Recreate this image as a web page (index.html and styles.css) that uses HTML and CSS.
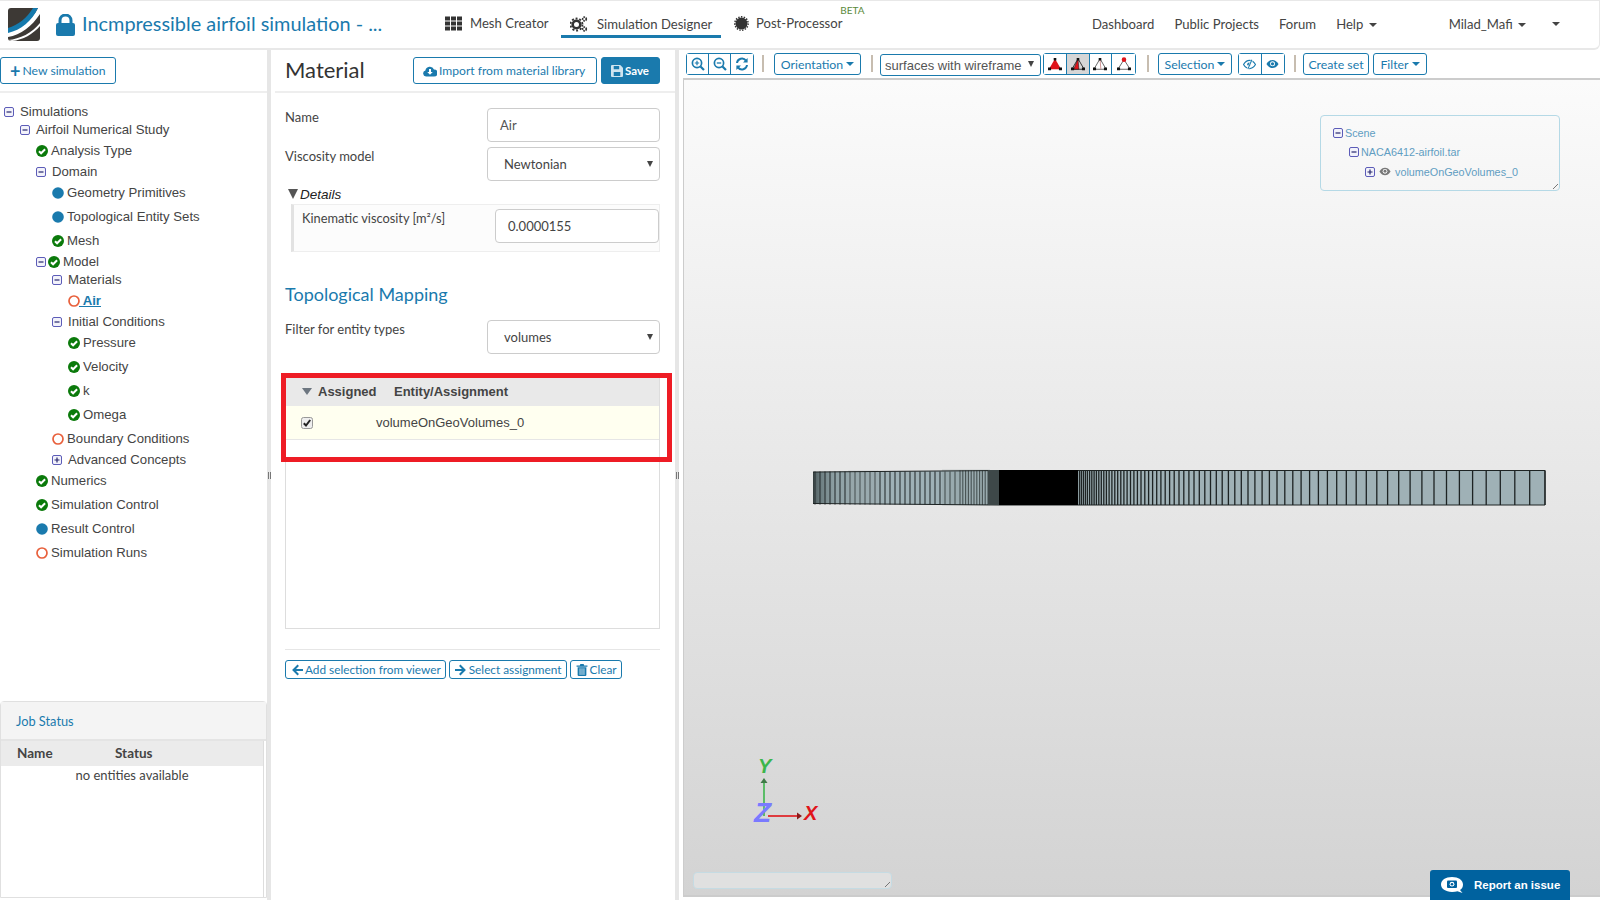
FILE: index.html
```html
<!DOCTYPE html>
<html lang="en">
<head>
<meta charset="utf-8">
<title>Material</title>
<link rel="stylesheet" href="styles.css">
</head>
<body>
<svg class="defs" aria-hidden="true">
  <symbol id="i-check" viewBox="0 0 12 12"><circle cx="6" cy="6" r="6" fill="#0b7a0b"/><path d="M3 6.2 5.1 8.3 9.1 4.2" fill="none" stroke="#fff" stroke-width="2"/></symbol>
  <symbol id="i-blue" viewBox="0 0 12 12"><circle cx="6" cy="6" r="5.8" fill="#1a7aad"/></symbol>
  <symbol id="i-ring" viewBox="0 0 12 12"><circle cx="6" cy="6" r="5" fill="none" stroke="#e8603c" stroke-width="1.7"/></symbol>
  <symbol id="i-minus" viewBox="0 0 10 10"><rect x=".5" y=".5" width="9" height="9" rx="1.5" fill="#f2f2fa" stroke="#5c5cb8"/><path d="M2.5 5h5" stroke="#26266e" stroke-width="1.2"/></symbol>
  <symbol id="i-plus" viewBox="0 0 10 10"><rect x=".5" y=".5" width="9" height="9" rx="1.5" fill="#f2f2fa" stroke="#5c5cb8"/><path d="M2.5 5h5M5 2.5v5" stroke="#26266e" stroke-width="1.2"/></symbol>
  <symbol id="i-zoomin" viewBox="0 0 14 14"><circle cx="6" cy="6" r="4.6" fill="none" stroke="#1a7aad" stroke-width="1.7"/><path d="M9.5 9.5 13 13" stroke="#1a7aad" stroke-width="2.2"/><path d="M3.8 6h4.4M6 3.8v4.4" stroke="#1a7aad" stroke-width="1.2"/></symbol>
  <symbol id="i-zoomout" viewBox="0 0 14 14"><circle cx="6" cy="6" r="4.6" fill="none" stroke="#1a7aad" stroke-width="1.7"/><path d="M9.5 9.5 13 13" stroke="#1a7aad" stroke-width="2.2"/><path d="M3.8 6h4.4" stroke="#1a7aad" stroke-width="1.3"/></symbol>
  <symbol id="i-refresh" viewBox="0 0 14 14"><path d="M2 6A5 5 0 0 1 11 3.6" fill="none" stroke="#1a7aad" stroke-width="2"/><path d="M12.6 1v4.6H8z" fill="#1a7aad"/><path d="M12 8A5 5 0 0 1 3 10.4" fill="none" stroke="#1a7aad" stroke-width="2"/><path d="M1.4 13V8.4H6z" fill="#1a7aad"/></symbol>
  <symbol id="i-eye" viewBox="0 0 14 10"><path d="M.5 5C2.5 1.8 4.6.6 7 .6s4.500 1.200 6.500 4.400C11.500 8.200 9.400 9.400 7 9.400S2.500 8.200.5 5z" fill="currentColor"/><circle cx="7" cy="4.800" r="2.700" fill="#fff"/><circle cx="7" cy="4.800" r="1.700" fill="currentColor"/></symbol>
  <symbol id="i-eyeoff" viewBox="0 0 14 12"><path d="M.5 6C2.500 2.800 4.600 1.600 7 1.600s4.500 1.200 6.500 4.400C11.500 9.200 9.400 10.400 7 10.400S2.500 9.200.5 6z" fill="none" stroke="currentColor" stroke-width="1.300"/><circle cx="6.500" cy="5.800" r="2" fill="currentColor"/><path d="M10 .5 5 11.500" stroke="#fff" stroke-width="2.200"/><path d="M9.600 .8 5.200 11" stroke="currentColor" stroke-width="1.100"/></symbol>
  <symbol id="i-corners" viewBox="0 0 16 16"><path d="M6.500 1h3v3h-3zM0 12h3.500v3H0zM12.500 12H16v3h-3.500z" fill="#111"/></symbol>
</svg>

<header class="topbar">
  <svg class="logo" viewBox="0 0 32 33"><rect width="32" height="33" rx="3" fill="#3d3935"/><path d="M0 24C12 21 23 13 30 0h2v6C24 18 13 27 0 29z" fill="#fff"/><path d="M0 25C13 22 24 13 30 0h-5C19 10 10 17 0 20z" fill="#1579ac"/><path d="M0 32C12 31 24 25 32 15v3C25 26 15 32 4 33z" fill="#fff"/></svg>
  <svg class="lock" viewBox="0 0 19 22"><path d="M4 10V6.500a5.500 5.500 0 0 1 11 0V10" fill="none" stroke="#1a7aad" stroke-width="3"/><rect y="9" width="19" height="13" rx="2" fill="#1a7aad"/></svg>
  <span class="project">Incmpressible airfoil simulation - ...</span>
  <nav class="apps">
    <a class="app app-mesh"><svg class="app-ico" viewBox="0 0 17 14"><path d="M0 0h5v4H0zM6 0h5v4H6zM12 0h5v4h-5zM0 5h5v4H0zM6 5h5v4H6zM12 5h5v4h-5zM0 10h5v4H0zM6 10h5v4H6zM12 10h5v4h-5z" fill="#333"/></svg>Mesh Creator</a>
    <a class="app app-active"><svg class="app-ico app-ico-cog" viewBox="0 0 18 16"><circle cx="6.500" cy="8.500" r="3.800" fill="none" stroke="#333" stroke-width="2.600"/><circle cx="6.500" cy="8.500" r="6" fill="none" stroke="#333" stroke-width="1.800" stroke-dasharray="2 1.800"/><circle cx="14.500" cy="3" r="1.800" fill="none" stroke="#333" stroke-width="1.700" stroke-dasharray="1.500 .7"/><circle cx="14.500" cy="13" r="1.800" fill="none" stroke="#333" stroke-width="1.700" stroke-dasharray="1.500 .7"/></svg>Simulation Designer</a>
    <a class="app app-post"><svg class="app-ico app-ico-post" viewBox="0 0 15 15"><circle cx="7.500" cy="7.500" r="6" fill="#333"/><circle cx="7.500" cy="7.500" r="6.700" fill="none" stroke="#333" stroke-width="1.400" stroke-dasharray="1.500 1.300"/></svg>Post-Processor<sup class="beta">BETA</sup></a>
  </nav>
  <nav class="links">
    <a class="link">Dashboard</a>
    <a class="link">Public Projects</a>
    <a class="link">Forum</a>
    <a class="link">Help <i class="caret"></i></a>
    <a class="link link-user">Milad_Mafi <i class="caret"></i></a>
    <i class="caret caret-end"></i>
  </nav>
</header>

<main class="workspace">
  <aside class="left">
    <div class="left-top"><a class="btn btn-new"><b class="plus">+</b>New simulation</a></div>
    <ul class="tree">
      <li class="node"><svg class="tg"><use href="#i-minus"/></svg>Simulations
      <ul class="sub">
        <li class="node"><svg class="tg"><use href="#i-minus"/></svg>Airfoil Numerical Study
        <ul class="sub">
          <li class="leaf"><svg class="st"><use href="#i-check"/></svg>Analysis Type</li>
          <li class="node"><svg class="tg"><use href="#i-minus"/></svg>Domain
          <ul class="sub">
            <li class="leaf"><svg class="st"><use href="#i-blue"/></svg>Geometry Primitives</li>
            <li class="leaf"><svg class="st"><use href="#i-blue"/></svg>Topological Entity Sets</li>
            <li class="leaf"><svg class="st"><use href="#i-check"/></svg>Mesh</li>
          </ul></li>
          <li class="node"><svg class="tg tg-tight"><use href="#i-minus"/></svg><svg class="st"><use href="#i-check"/></svg>Model
          <ul class="sub">
            <li class="node"><svg class="tg"><use href="#i-minus"/></svg>Materials
            <ul class="sub">
              <li class="leaf leaf-air"><svg class="st"><use href="#i-ring"/></svg><a class="current">&nbsp;Air</a></li>
            </ul></li>
            <li class="node"><svg class="tg"><use href="#i-minus"/></svg>Initial Conditions
            <ul class="sub">
              <li class="leaf"><svg class="st"><use href="#i-check"/></svg>Pressure</li>
              <li class="leaf"><svg class="st"><use href="#i-check"/></svg>Velocity</li>
              <li class="leaf"><svg class="st"><use href="#i-check"/></svg>k</li>
              <li class="leaf"><svg class="st"><use href="#i-check"/></svg>Omega</li>
            </ul></li>
            <li class="leaf"><svg class="st"><use href="#i-ring"/></svg>Boundary Conditions</li>
            <li class="node"><svg class="tg"><use href="#i-plus"/></svg>Advanced Concepts</li>
          </ul></li>
        </ul></li>
        <li class="leaf leaf-l1"><svg class="st"><use href="#i-check"/></svg>Numerics</li>
        <li class="leaf leaf-l1"><svg class="st"><use href="#i-check"/></svg>Simulation Control</li>
        <li class="leaf leaf-l1"><svg class="st"><use href="#i-blue"/></svg>Result Control</li>
        <li class="leaf leaf-l1"><svg class="st"><use href="#i-ring"/></svg>Simulation Runs</li>
      </ul></li>
    </ul>
    <section class="jobs">
      <h3 class="jobs-head">Job Status</h3>
      <div class="jobs-body">
        <div class="jobs-cols"><b class="col-name">Name</b><b>Status</b></div>
        <p class="jobs-empty">no entities available</p>
      </div>
    </section>
  </aside>
  <div class="split"><i class="grip"></i></div>

  <section class="center">
    <div class="title-row">
      <h1 class="title">Material</h1>
      <a class="btn btn-import"><svg class="bi bi-cloud" viewBox="0 0 14 11"><path d="M3 11a3 3 0 0 1-.6-5.900A4.500 4.500 0 0 1 11 4a3.500 3.500 0 0 1 0 7z" fill="#1a7aad"/><path d="M6 3.500h2v3h1.800L7 9.300 4.200 6.500H6z" fill="#fff"/></svg>Import from material library</a>
      <a class="btn btn-save"><svg class="bi" viewBox="0 0 11 11"><path d="M0 1a1 1 0 0 1 1-1h7.500L11 2.500V10a1 1 0 0 1-1 1H1a1 1 0 0 1-1-1z" fill="#cfe4ef"/><path d="M2.500 1h5v3h-5zM2.500 6.500h6V10h-6z" fill="#1a7aad"/></svg>Save</a>
    </div>
    <div class="form">
      <div class="row row-name"><label class="lbl">Name</label><span class="field field-text">Air</span></div>
      <div class="row row-visc"><label class="lbl">Viscosity model</label><span class="field field-sel">Newtonian<i class="sel-arrow"></i></span></div>
      <div class="details-title"><i class="tri-down"></i><em>Details</em></div>
      <div class="details">
        <label class="lbl lbl-kin">Kinematic viscosity [m²/s]</label><span class="field field-num">0.0000155</span>
      </div>
      <h2 class="mapping">Topological Mapping</h2>
      <div class="row row-filter"><label class="lbl">Filter for entity types</label><span class="field field-sel">volumes<i class="sel-arrow"></i></span></div>
      <div class="assign">
        <div class="assign-head"><i class="tri-sort"></i><b class="col-assigned">Assigned</b><b>Entity/Assignment</b></div>
        <div class="assign-row"><svg class="cb" viewBox="0 0 12 12"><rect x=".5" y=".5" width="11" height="11" rx="2" fill="#eee" stroke="#999"/><path d="M2.800 6.200 5 8.500 9.200 3" fill="none" stroke="#222" stroke-width="2"/></svg><span>volumeOnGeoVolumes_0</span></div>
      </div>
      <div class="highlight"></div>
      <div class="actions">
        <a class="btn btn-sm"><svg class="bi" viewBox="0 0 11 11"><path d="M6 .5 1 5.500l5 5 1.300-1.300-2.700-2.700H11v-2H4.600l2.700-2.700z" fill="#1a7aad"/></svg>Add selection from viewer</a>
        <a class="btn btn-sm"><svg class="bi" viewBox="0 0 11 11"><path d="M5 .5 10 5.500l-5 5-1.300-1.300 2.700-2.700H0v-2h6.400L3.700 1.800z" fill="#1a7aad"/></svg>Select assignment</a>
        <a class="btn btn-sm"><svg class="bi" viewBox="0 0 10 11"><path d="M3.500 0h3l.5 1.300h3v1.200H0V1.300h3zM1 3h8v7a1 1 0 0 1-1 1H2a1 1 0 0 1-1-1z" fill="#1a7aad"/><path d="M3.200 4v6M5 4v6M6.800 4v6" stroke="#fff" stroke-width=".7"/></svg>Clear</a>
      </div>
    </div>
  </section>
  <div class="split split-2"><i class="grip"></i></div>

  <section class="viewer">
    <div class="toolbar">
      <div class="group"><a class="tb tb-icon"><svg class="ti"><use href="#i-zoomin"/></svg></a><a class="tb tb-icon"><svg class="ti"><use href="#i-zoomout"/></svg></a><a class="tb tb-icon"><svg class="ti"><use href="#i-refresh"/></svg></a></div>
      <i class="sep"></i>
      <a class="tb tb-orient">Orientation <i class="caret caret-blue"></i></a>
      <i class="sep sep-2"></i>
      <span class="tb-select">surfaces with wireframe<i class="sel-arrow sel-arrow-sm"></i></span>
      <div class="group group-tri">
        <a class="tb tb-tri"><svg class="tri" viewBox="0 0 16 16"><path d="M8 2 15 14H1z" fill="#e0141a"/><use href="#i-corners"/></svg></a>
        <a class="tb tb-tri tb-on"><svg class="tri" viewBox="0 0 16 16"><path d="M8 2 15 14H1z" fill="none" stroke="#222"/><path d="M8 2 9 14H3z" fill="#e0141a" stroke="#111" stroke-width=".6"/><use href="#i-corners"/></svg></a>
        <a class="tb tb-tri"><svg class="tri" viewBox="0 0 16 16"><path d="M8 2 15 14H1z" fill="#fff" stroke="#555"/><path d="M8 2 9 14" stroke="#c88"/><use href="#i-corners"/></svg></a>
        <a class="tb tb-tri"><svg class="tri" viewBox="0 0 16 16"><path d="M8 3 15 14H1z" fill="#fff" stroke="#555"/><use href="#i-corners"/><circle cx="8" cy="3" r="2.600" fill="#e0141a"/></svg></a>
      </div>
      <i class="sep sep-3"></i>
      <a class="tb tb-sel">Selection <i class="caret caret-blue"></i></a>
      <div class="group group-eye"><a class="tb tb-eye"><svg class="ei"><use href="#i-eyeoff"/></svg></a><a class="tb tb-eye"><svg class="ei ei-b"><use href="#i-eye"/></svg></a></div>
      <i class="sep sep-4"></i>
      <a class="tb tb-create">Create set</a>
      <a class="tb tb-filter">Filter <i class="caret caret-blue"></i></a>
    </div>
    <div class="canvas">
      <svg class="mesh" id="mesh" viewBox="813 468 733 40"></svg>
      <svg class="axes" viewBox="0 0 80 80">
        <path d="M20 66V32" stroke="#3cb64c" stroke-width="1.600"/>
        <path d="M20 28 16.500 33h7z" fill="#3f7a47"/>
        <path d="M24 66H54" stroke="#e0141a" stroke-width="1.600"/>
        <path d="M58 66 53 62.500v7z" fill="#8a1a1a"/>
        <text class="ax ax-y" x="14" y="23">Y</text>
        <text class="ax ax-x" x="60" y="70">X</text>
        <text class="ax ax-z" x="10" y="72">Z</text>
      </svg>
      <div class="scene">
        <div class="sc-row"><svg class="tg sc-tg"><use href="#i-minus"/></svg>Scene</div>
        <div class="sc-row sc-2"><svg class="tg sc-tg"><use href="#i-minus"/></svg>NACA6412-airfoil.tar</div>
        <div class="sc-row sc-3"><svg class="tg sc-tg"><use href="#i-plus"/></svg><svg class="sc-eye"><use href="#i-eye"/></svg>volumeOnGeoVolumes_0</div>
        <i class="resize"></i>
      </div>
      <div class="status-box"><i class="resize"></i></div>
      <a class="report"><svg class="cam" viewBox="0 0 24 18"><path d="M12 1c6.500 0 11 3 11 7.500 0 2.500-1 4.500-3 5.500l2.500 3-5-1.800c-1.500.5-3.300.8-5.500.8C5.500 15.500 1 12.900 1 8.500S5.500 1 12 1z" fill="#fff"/><rect x="7" y="4.500" width="10" height="7.500" rx="1" fill="#00629f"/><circle cx="12" cy="8.200" r="2.400" fill="#fff"/><circle cx="12" cy="8.200" r="1.300" fill="#00629f"/></svg>Report an issue</a>
    </div>
  </section>
</main>
<script src="mesh.js"></script>
</body>
</html>
```
FILE: styles.css
```css
* { box-sizing: border-box; }
html, body { margin: 0; height: 900px; overflow: hidden; background: #fff; }
body { font: 14px "Liberation Sans", Arial, sans-serif; color: #444; }
.defs { display: none; }
a { color: inherit; text-decoration: none; }
ul { list-style: none; margin: 0; padding: 0; }

.topbar { height: 50px; display: flex; align-items: center; border: 1px solid #e8e8e8; border-width: 1px 1px 2px 0; border-radius: 0 0 6px 0; font-family: Lato, sans-serif; }
.logo { width: 32px; height: 33px; margin-left: 8px; flex: none; }
.lock { width: 19px; height: 22px; margin-left: 16px; flex: none; }
.project { font-size: 19.900px; color: #1a7aad; margin: 0 0 3px 7px; width: 351px; white-space: nowrap; }
.apps { display: flex; height: 100%; align-items: stretch; font-size: 13.100px; color: #444; padding-bottom: 3px; }
.app { display: flex; align-items: center; padding: 0 12px; position: relative; white-space: nowrap; }
.app-mesh { width: 128px; padding-left: 12px; }
.app-ico { width: 17px; height: 15px; margin-right: 8px; flex: none; }
.app-ico-cog { width: 18px; height: 16px; margin-right: 9px; }
.app-active { width: 160px; height: 37px; border-bottom: 3px solid #1a7aad; padding: 12px 0 0 9px; }
.app-post { padding-left: 13px; }
.app-ico-post { width: 15px; height: 15px; margin-right: 7px; }
.beta { position: absolute; right: -10px; top: 3px; font-size: 10px; color: #5a8a3a; line-height: 12px; }
.links { margin-left: auto; display: flex; align-items: center; font-size: 13.100px; color: #444; margin-bottom: 1px; }
.link { margin-right: 20px; white-space: nowrap; }
.link-user { margin-left: 52px; margin-right: 23px; }
.caret { display: inline-block; width: 0; height: 0; border: 4px solid transparent; border-top-color: #444; border-bottom: 0; vertical-align: 2px; margin-left: 2px; }
.caret-end { margin: 0 39px 0 3px; }
.caret-blue { border-top-color: #1a7aad; margin-left: 3px; }

.workspace { display: flex; height: 850px; }
.left { width: 267px; flex: none; display: flex; flex-direction: column; }
.split { width: 4px; flex: none; background: #e6e6e6; position: relative; }
.split-2 { margin-right: 4px; }
.grip { position: absolute; left: 1px; top: 422px; width: 3px; height: 7px; border: solid #777; border-width: 0 1px; }

.btn { display: inline-flex; align-items: center; border: 1px solid #1a7aad; border-radius: 3px; color: #1a7aad; font: 12px Lato, sans-serif; white-space: nowrap; background: #fff; }
.left-top { height: 43px; border-bottom: 2px solid #eee; padding-top: 7px; }
.btn-new { height: 27px; width: 116px; padding-left: 9px; font-size: 12.200px; }
.plus { font-size: 18px; line-height: 12px; margin-right: 2px; }

.tree { margin-top: 10px; font-size: 13.200px; line-height: 18px; color: #444; }
.tree .sub { padding-left: 16px; }
.node { white-space: nowrap; }
.leaf { height: 24px; line-height: 24px; white-space: nowrap; }
.tg { width: 10px; height: 10px; margin: 0 6px 0 4px; vertical-align: -1px; }
.tg-tight { margin-right: 2px; }
.st { width: 12px; height: 12px; margin: 0 3px 0 4px; vertical-align: -2px; }
.tg-tight + .st { margin-left: 0; }
.tree > .node > .sub > .leaf { padding-left: 16px; margin-left: 0; }
.current { color: #1a7aad; font-weight: bold; text-decoration: underline; margin-left: -4px; }

.jobs { margin: auto 0 2px; height: 197px; border: 1px solid #e0e0e0; border-radius: 4px 4px 0 0; font-family: Lato, sans-serif; }
.jobs-head { margin: 0; height: 39px; background: #f4f4f4; border-bottom: 2px solid #e4e4e4; font: 12.800px/39px Lato, sans-serif; color: #1a7aad; padding-left: 15px; }
.jobs-body { margin-right: 2px; height: 156px; border-right: 1px solid #ddd; }
.jobs-cols { display: flex; height: 25px; line-height: 24px; background: #ebebeb; padding-left: 16px; font-size: 13.500px; color: #444; }
.col-name { width: 98px; }
.jobs-empty { margin: 0; text-align: center; font-size: 13px; line-height: 18px; }

.center { width: 404px; flex: none; padding-left: 4px; font-family: Lato, sans-serif; position: relative; }
.title-row { height: 43px; border-bottom: 2px solid #eee; display: flex; padding: 7px 15px 0 10px; }
.title { margin: 0; font: 400 22px/26px Lato, sans-serif; color: #333; flex: 1; }
.btn-import { height: 27px; width: 184px; padding-left: 9px; font-size: 12.100px; }
.bi { width: 12px; height: 12px; margin-right: 3px; flex: none; }
.bi-cloud { width: 14px; margin-right: 2px; }
.btn-save { height: 27px; width: 59px; margin-left: 4px; background: #1a7aad; color: #fff; padding-left: 9px; font-weight: bold; font-size: 11.500px; }
.btn-save .bi { margin-right: 2px; }
.form { padding: 0 15px 0 10px; }
.row { display: flex; justify-content: space-between; align-items: flex-start; }
.lbl { font-size: 13px; color: #444; padding-top: 1px; }
.row-name { margin-top: 15px; height: 39px; }
.row-visc { height: 35px; }
.row-filter { height: 34px; }
.field { display: flex; align-items: center; width: 173px; height: 34px; border: 1px solid #ccc; border-radius: 4px; background: #fff; font-size: 13px; position: relative; }
.field-text { padding-left: 12px; color: #555; }
.field-sel { padding-left: 16px; color: #444; }
.sel-arrow { position: absolute; right: 6px; top: 13px; width: 0; height: 0; border: 3.500px solid transparent; border-top: 6px solid #444; border-bottom: 0; }
.details-title { height: 22px; display: flex; align-items: center; padding: 2px 0 0 3px; font: 13.500px "Liberation Sans", sans-serif; color: #222; }
.tri-down { width: 0; height: 0; border: 5.500px solid transparent; border-top: 10px solid #555; border-bottom: 0; margin-right: 2px; }
.details { margin-left: 6px; height: 48px; display: flex; justify-content: space-between; align-items: flex-start; border: 1px solid #eee; border-left: 3px solid #e2e2e2; background: #fcfcfc; padding: 4px 0 0 8px; }
.lbl-kin { font-size: 12.800px; }
.field-num { width: 164px; padding-left: 12px; color: #444; }
.mapping { margin: 29px 0 13px; font: 400 18px/26px Lato, sans-serif; color: #1a7aad; }
.assign { margin-top: 24px; height: 251px; border: 1px solid #ddd; border-top: 0; font: 13px "Liberation Sans", sans-serif; }
.assign-head { height: 28px; background: #e9e9e9; display: flex; align-items: center; padding: 0 0 2px 16px; font-size: 13px; color: #444; }
.tri-sort { width: 0; height: 0; border: 5px solid transparent; border-top: 7px solid #6d7680; border-bottom: 0; margin-right: 6px; }
.col-assigned { width: 76px; }
.assign-row { height: 34px; background: #fffff0; border-bottom: 1px solid #e6e6e6; display: flex; align-items: center; padding-left: 15px; }
.cb { width: 12px; height: 12px; margin-right: 63px; }
.highlight { position: absolute; left: 10px; top: 323px; width: 391px; height: 89px; border: 5px solid #ee1c25; }
.actions { margin-top: 20px; padding-top: 10px; border-top: 1px solid #e6e6e6; display: flex; gap: 3px; }
.btn-sm { height: 19px; padding: 0 4px 0 5px; font-size: 11.800px; }
.btn-sm .bi { margin-right: 2px; }

.viewer { flex: 1; min-width: 0; display: flex; flex-direction: column; height: 847px; }
.toolbar { height: 28px; flex: none; display: flex; align-items: flex-start; padding: 3px 0 0 3px; font: 12.300px Lato, sans-serif; color: #1a7aad; }
.group { display: flex; border: 1px solid #1a7aad; border-radius: 3px; height: 22px; background: #fff; }
.tb { display: flex; align-items: center; justify-content: center; height: 22px; border: 1px solid #1a7aad; border-radius: 3px; white-space: nowrap; background: #fff; }
.group .tb { height: 20px; border: 0; border-right: 1px solid #1a7aad; border-radius: 0; }
.group .tb:last-child { border-right: 0; }
.tb-icon { width: 22px; }
.ti { width: 14px; height: 14px; }
.sep { width: 2px; height: 17px; background: #c7bdb0; margin: 2px 10px 0 8px; flex: none; }
.tb-orient { width: 87px; }
.sep-2 { margin: 2px 7px 0 10px; }
.tb-select { width: 161px; height: 22px; margin-top: 1px; border: 1px solid #1a7aad; border-radius: 3px; display: flex; align-items: center; padding-left: 4px; font: 13px "Liberation Sans", sans-serif; color: #555; position: relative; }
.sel-arrow-sm { top: 6px; right: 6px; }
.group-tri { margin-left: 2px; width: 93px; }
.tb-tri { width: 23px; }
.tb-on { background: #d6d6d6; }
.tri { width: 14px; height: 14px; }
.sep-3 { margin: 2px 9px 0 11px; }
.tb-sel { width: 74px; }
.group-eye { margin-left: 6px; width: 47px; }
.tb-eye { width: 23px; color: #1a7aad; }
.ei { width: 13px; height: 11px; }
.ei-b { height: 10px; }
.sep-4 { margin: 2px 7px 0 9px; }
.tb-create { width: 66px; }
.tb-filter { width: 54px; margin-left: 4px; }

.canvas { flex: 1; position: relative; border: 2px solid #ccc; border-width: 2px 0 2px 1px; background: linear-gradient(#fbfbfb, #d3d3d3); }
.mesh { position: absolute; left: 129px; top: 388px; width: 733px; height: 40px; }
.axes { position: absolute; left: 60px; top: 670px; width: 80px; height: 80px; }
.ax { font: italic bold 20px "Liberation Sans", sans-serif; }
.ax-y { fill: #3cb64c; }
.ax-x { fill: #e0141a; }
.ax-z { fill: #7a7aff; font-size: 28px; }
.scene { position: absolute; left: 636px; top: 35px; width: 240px; height: 76px; border: 1px solid #b5d9e6; border-radius: 4px; font-size: 10.800px; color: #5f9dc2; padding: 7px 0 0 12px; }
.sc-row { height: 19.500px; display: flex; align-items: center; white-space: nowrap; }
.sc-tg { margin: 0 2px 0 0; }
.sc-2 { padding-left: 16px; }
.sc-3 { padding-left: 32px; }
.sc-eye { width: 12px; height: 9px; margin: 0 4px 0 2px; color: #777; }
.resize { position: absolute; right: 1px; bottom: 1px; width: 10px; height: 10px; background: repeating-linear-gradient(135deg, transparent 0 2px, #777 2px 3px, transparent 3px 4px); clip-path: polygon(100% 0, 100% 100%, 0 100%); }
.status-box { position: absolute; left: 9px; top: 792px; width: 199px; height: 17px; border: 1px solid #c5dbe3; border-radius: 4px; background: #e0e0e0; }
.report { position: absolute; left: 746px; top: 790px; width: 140px; height: 34px; background: #00629f; border-radius: 3px 3px 0 0; color: #fff; font: bold 11.500px "Liberation Sans", sans-serif; display: flex; align-items: center; padding: 0 0 4px 10px; }
.cam { width: 24px; height: 18px; margin-right: 10px; }
```
FILE: mesh.js
```javascript
// Builds the extruded airfoil mesh: a quad strip whose cell width follows the grading of the mesh.
(function () {
  var NS = "http://www.w3.org/2000/svg";
  var svg = document.getElementById("mesh");
  function add(tag, attrs) {
    var el = document.createElementNS(NS, tag);
    for (var k in attrs) el.setAttribute(k, attrs[k]);
    svg.appendChild(el);
  }
  var grad = document.createElementNS(NS, "linearGradient");
  grad.id = "lead";
  [["0", "#4e5b5d"], ["0.01", "#6c7d80"], ["0.03", "#8fa1a5"], ["0.1", "#9fb1b6"], ["1", "#9fb1b6"]].forEach(function (s) {
    var st = document.createElementNS(NS, "stop");
    st.setAttribute("offset", s[0]);
    st.setAttribute("stop-color", s[1]);
    grad.appendChild(st);
  });
  svg.appendChild(grad);

  add("path", { d: "M813 472 1000 470.500H1545V505H1000L813 503.500z", fill: "url(#lead)" });

  var left = "", right = "", x, s;
  for (x = 815; x < 960; x += 5) left += "M" + x + " 471.500V504.500";
  for (x = 960; x < 990; x += 2.8) left += "M" + x + " 470.500V505";
  for (x = 1545; x > 1078;) {
    right += "M" + x.toFixed(1) + " 470.500V505";
    s = 1.8 + (x - 1078) * 0.029;
    x -= s;
  }
  add("path", { d: left, stroke: "#2a3233", "stroke-width": 1.1, fill: "none" });
  add("path", { d: right, stroke: "#1d2323", "stroke-width": 1.3, fill: "none" });
  add("rect", { x: 848, y: 470.5, width: 30, height: 34, fill: "#9aa8ab", opacity: 0.3 });
  add("rect", { x: 942, y: 469.500, width: 48, height: 36, fill: "#8a9a9d", opacity: 0.3 });
  add("path", { d: "M813 472 1000 470.500H1545M813 503.500 1000 505H1545M813 472V503.500M1545 470.500V505", stroke: "#1d2323", "stroke-width": 1, fill: "none" });
  add("rect", { x: 988, y: 470, width: 11, height: 35, fill: "#3e4849" });
  add("rect", { x: 999, y: 470, width: 79, height: 35, fill: "#000" });
})();
```
